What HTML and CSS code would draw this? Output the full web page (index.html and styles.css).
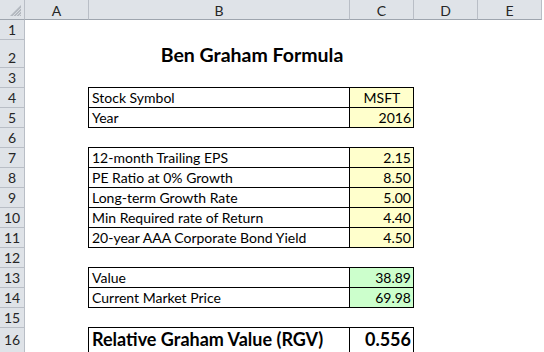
FILE: index.html
```html
<!DOCTYPE html>
<html>
<head>
<meta charset="utf-8">
<title>Ben Graham Formula</title>
<link rel="stylesheet" href="styles.css">
</head>
<body>
<div class="sheet">
  <div class="hd corner"><svg class="selall" width="24" height="19" viewBox="0 0 24 19"><polygon points="21,5 21,16 10,16" fill="#b4b9c0"/><path d="M13 16 L21 8 M16 16 L21 11 M19 16 L21 14" stroke="#dfe3e8" stroke-width="0.8"/></svg></div>
  <div class="hd colhd">A</div>
  <div class="hd colhd">B</div>
  <div class="hd colhd">C</div>
  <div class="hd colhd">D</div>
  <div class="hd colhd">E</div>

  <div class="hd rowhd">1</div><div class="blank s5"></div>

  <div class="hd rowhd">2</div><div class="blank"></div>
  <div class="c title s2">Ben Graham Formula</div><div class="blank s2"></div>

  <div class="hd rowhd">3</div><div class="blank s5"></div>

  <div class="hd rowhd">4</div><div class="blank"></div>
  <div class="c bx">Stock Symbol</div><div class="c bx y ctr">MSFT</div><div class="blank s2"></div>

  <div class="hd rowhd">5</div><div class="blank"></div>
  <div class="c bx">Year</div><div class="c bx y num">2016</div><div class="blank s2"></div>

  <div class="hd rowhd">6</div><div class="blank s5"></div>

  <div class="hd rowhd">7</div><div class="blank"></div>
  <div class="c bx">12-month Trailing EPS</div><div class="c bx y num">2.15</div><div class="blank s2"></div>

  <div class="hd rowhd">8</div><div class="blank"></div>
  <div class="c bx">PE Ratio at 0% Growth</div><div class="c bx y num">8.50</div><div class="blank s2"></div>

  <div class="hd rowhd">9</div><div class="blank"></div>
  <div class="c bx">Long-term Growth Rate</div><div class="c bx y num">5.00</div><div class="blank s2"></div>

  <div class="hd rowhd">10</div><div class="blank"></div>
  <div class="c bx">Min Required rate of Return</div><div class="c bx y num">4.40</div><div class="blank s2"></div>

  <div class="hd rowhd">11</div><div class="blank"></div>
  <div class="c bx">20-year AAA Corporate Bond Yield</div><div class="c bx y num">4.50</div><div class="blank s2"></div>

  <div class="hd rowhd">12</div><div class="blank s5"></div>

  <div class="hd rowhd">13</div><div class="blank"></div>
  <div class="c bx">Value</div><div class="c bx g num">38.89</div><div class="blank s2"></div>

  <div class="hd rowhd">14</div><div class="blank"></div>
  <div class="c bx">Current Market Price</div><div class="c bx g num">69.98</div><div class="blank s2"></div>

  <div class="hd rowhd">15</div><div class="blank s5"></div>

  <div class="hd rowhd last">16</div><div class="blank"></div>
  <div class="c bx big">Relative Graham Value (RGV)</div><div class="c bx big num">0.556</div><div class="blank s2"></div>
</div>
</body>
</html>
```

FILE: styles.css
```css
* { box-sizing: border-box; }

html, body {
  margin: 0;
  padding: 0;
  background: #ffffff;
}

body {
  font-family: Lato, "Liberation Sans", sans-serif;
  font-size: 14px;
  color: #000;
  height: 352px;
  overflow: hidden;
}

.sheet {
  display: grid;
  grid-template-columns: 25px 64px 261px 64px 64px 64px;
  grid-template-rows: 20px 20px 28px repeat(13, 20px) 25px;
  width: 542px;
}

.hd {
  background: #dfe3e8;
  border-right: 1px solid #b9bec6;
  border-bottom: 1px solid #b9bec6;
  color: #262626;
  display: flex;
  justify-content: center;
  line-height: 17px;
}

.colhd {
  align-items: center;
  border-bottom-color: #9ea5ae;
  padding-top: 1px;
}

.corner {
  border-bottom-color: #9ea5ae;
}

.selall {
  display: block;
}

.rowhd {
  align-items: flex-end;
  padding-bottom: 1px;
}

.rowhd.last {
  padding-bottom: 4px;
}

.s2 { grid-column: span 2; }
.s5 { grid-column: span 5; }

.c {
  display: flex;
  align-items: flex-end;
  line-height: 17px;
  padding: 0 2px 1px 3px;
  white-space: nowrap;
  overflow: hidden;
}

.bx {
  border: 1px solid #000;
  margin: -1px 0 0 -1px;
}

.y { background: #ffffcc; }
.g { background: #ccffcc; }

.num { justify-content: flex-end; }
.ctr { justify-content: center; }

.title {
  justify-content: center;
  font-weight: bold;
  font-size: 19.5px;
  line-height: 22px;
  padding-bottom: 2px;
}

.big {
  font-weight: bold;
  font-size: 18px;
  line-height: 20px;
  padding-bottom: 3px;
}
```
